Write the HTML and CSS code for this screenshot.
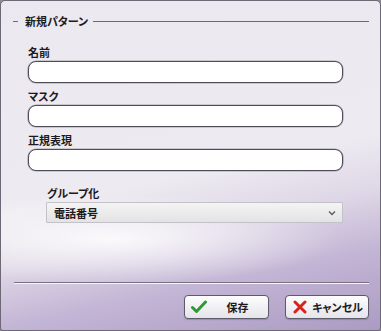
FILE: index.html
```html
<!DOCTYPE html>
<html lang="ja">
<head>
  <meta charset="UTF-8">
  <title>新規パターン</title>
  <meta name="viewport" content="width=device-width, initial-scale=1.0">
  <link rel="stylesheet" href="styles.css">
</head>
<body>

  <div class="dialog">
    <div class="group-title">
      <span class="dash"></span>
      <span class="title-text">新規パターン</span>
      <span class="rule"></span>
    </div>

    <div class="fields">
      <div class="field">
        <div class="label">名前</div>
        <div class="textbox"></div>
      </div>
      <div class="field">
        <div class="label">マスク</div>
        <div class="textbox"></div>
      </div>
      <div class="field">
        <div class="label">正規表現</div>
        <div class="textbox"></div>
      </div>

      <div class="field group-field">
        <div class="label">グループ化</div>
        <div class="combo">
          <span class="combo-text">電話番号</span>
          <svg class="chevron" width="8" height="6" viewBox="0 0 8 6">
            <path d="M1 1.5 L4 4.5 L7 1.5" fill="none" stroke="#5a5a5a" stroke-width="1.3"/>
          </svg>
        </div>
      </div>
    </div>

    <div class="footer">
      <div class="separator"></div>
      <div class="buttons">
        <div class="btn">
          <svg class="btn-icon" width="16" height="14" viewBox="0 0 16 14">
            <path d="M1.5 7.5 L5.5 11.5 L14.5 2" fill="none" stroke="#2f9a34" stroke-width="3" stroke-linecap="round" stroke-linejoin="round"/>
          </svg>
          <span class="btn-text">保存</span>
        </div>
        <div class="btn">
          <svg class="btn-icon" width="14" height="14" viewBox="0 0 14 14">
            <path d="M2 2 L12 12 M12 2 L2 12" fill="none" stroke="#d9221e" stroke-width="3" stroke-linecap="round"/>
          </svg>
          <span class="btn-text">キャンセル</span>
        </div>
      </div>
    </div>
  </div>

</body>
</html>
```

FILE: styles.css
```css
html, body {
  margin: 0;
  padding: 0;
  width: 381px;
  height: 331px;
  overflow: hidden;
  background-color: #8d8a93;
  font-family: "Noto Sans CJK JP", "Noto Sans", sans-serif;
  font-feature-settings: "palt";
  color: #1c1b20;
}

.dialog {
  box-sizing: border-box;
  width: 381px;
  height: 331px;
  border: 1px solid #6c6876;
  border-radius: 5px 5px 3px 3px;
  padding: 0 11px 0 12px;
  display: flex;
  flex-direction: column;
  background:
    radial-gradient(ellipse 230px 45px at 110px 238px, rgba(255, 255, 255, 0.85), rgba(255, 255, 255, 0) 100%),
    linear-gradient(168deg, #ebe8ef 0%, #edebf1 52%, #ded6e6 66%, #c3b5d5 80%, #ab9bc3 100%);
}

.group-title {
  display: flex;
  align-items: center;
  height: 14px;
  margin-top: 13px;
  font-size: 11px;
  font-weight: 700;
}

.dash {
  width: 5px;
  height: 1px;
  background-color: #6d6977;
}

.title-text {
  margin: 0 5px 0 7px;
}

.rule {
  flex: 1;
  height: 1px;
  background-color: #6d6977;
}

.fields {
  width: 315px;
  margin-left: 15px;
  margin-top: 17px;
  display: flex;
  flex-direction: column;
  gap: 6px;
}

.field {
  display: flex;
  flex-direction: column;
  gap: 2px;
}

.label {
  font-size: 11px;
  font-weight: 700;
  line-height: 14px;
}

.textbox {
  box-sizing: border-box;
  height: 22px;
  background-color: #ffffff;
  border: 1px solid #4f4c5a;
  border-radius: 8px;
  box-shadow: 0 0 0 0.6px rgba(80, 76, 92, 0.45);
}

.group-field {
  margin-top: 9px;
  margin-left: 18px;
}

.group-field .label {
  padding-left: 1px;
}

.combo {
  box-sizing: border-box;
  height: 21px;
  border: 1px solid #c4c2c8;
  border-radius: 1px;
  background: linear-gradient(to bottom, #f4f4f4, #e3e3e3);
  display: flex;
  align-items: center;
  justify-content: space-between;
  padding: 0 6px 0 7px;
}

.combo-text {
  font-size: 11px;
  font-weight: 700;
}

.footer {
  margin-top: auto;
  padding-bottom: 11px;
}

.separator {
  margin-left: 1px;
  height: 0;
  border-top: 1px solid #75717e;
  border-bottom: 1px solid #f7f5f9;
}

.buttons {
  display: flex;
  justify-content: flex-end;
  gap: 16px;
  margin-top: 11px;
}

.btn {
  box-sizing: border-box;
  width: 85px;
  height: 24px;
  border: 1px solid #5d5a69;
  border-radius: 4px;
  background: linear-gradient(to bottom, #fdfdfd, #f0eff3 55%, #e6e4ea);
  box-shadow: 0 1px 1px rgba(60, 50, 80, 0.25);
  display: flex;
  align-items: center;
  padding-left: 6px;
}

.btn + .btn {
  width: 84px;
  padding-left: 7px;
}

.btn-text {
  flex: 1;
  text-align: center;
  font-size: 11px;
  font-weight: 700;
}
```
